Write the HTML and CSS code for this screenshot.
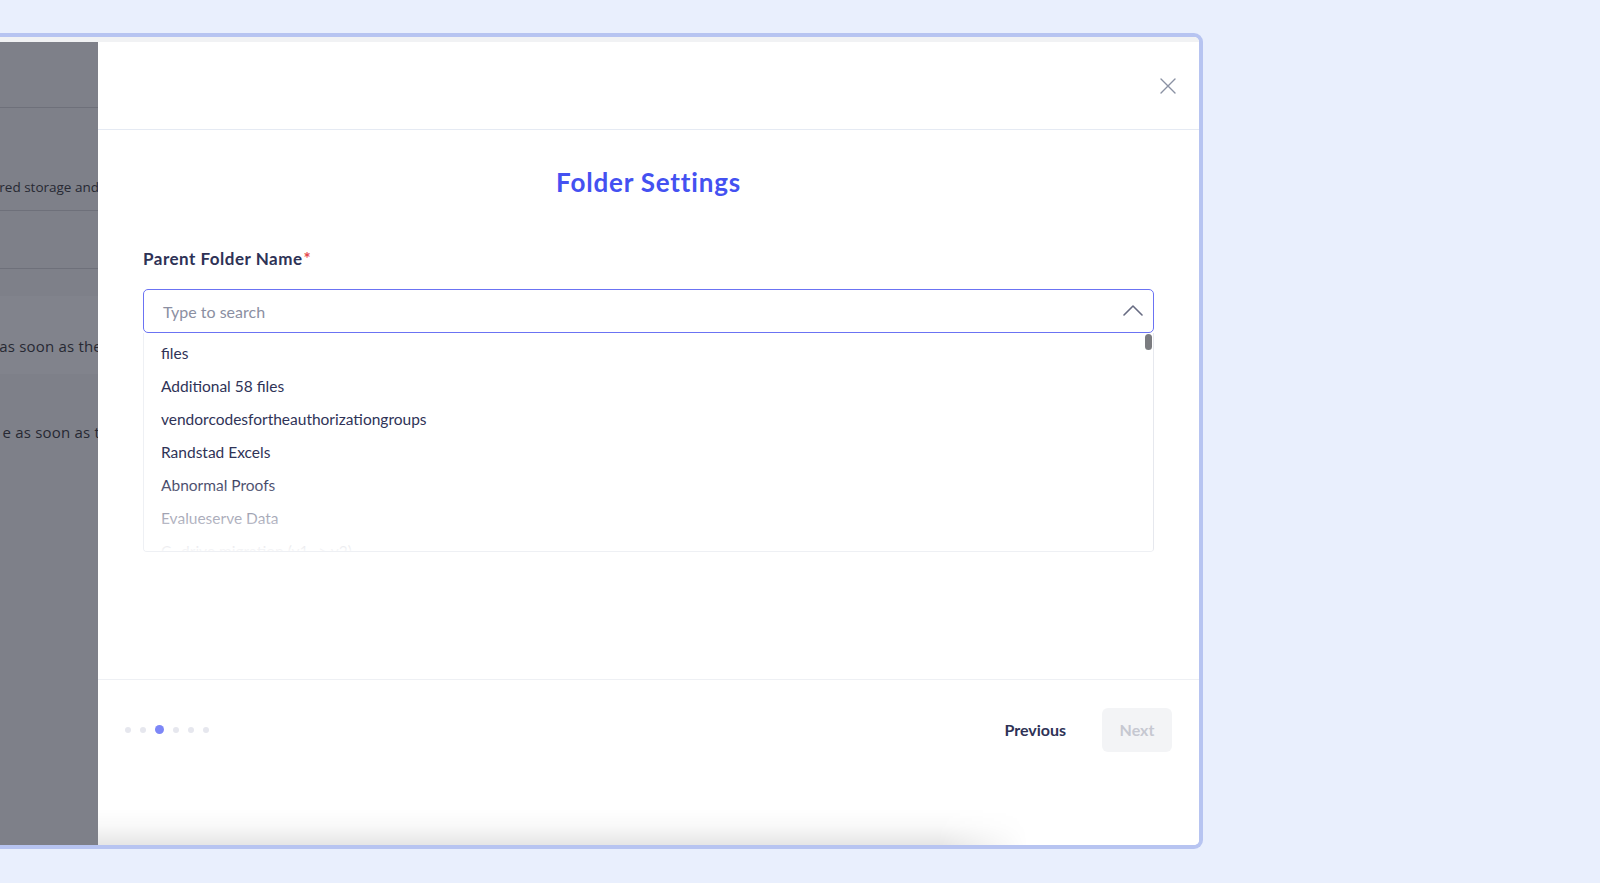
FILE: index.html
```html
<!DOCTYPE html>
<html lang="en">
<head>
<meta charset="utf-8">
<title>Folder Settings</title>
<link rel="stylesheet" href="styles.css">
</head>
<body>
<div class="stage">
  <div class="frame">
    <div class="topband"></div>
    <div class="main">
      <div class="backdrop">
        <div class="bd-row bd-row1"></div>
        <div class="bd-row bd-row2"><span class="bd-text bd-small">red storage and</span></div>
        <div class="bd-row bd-row3"></div>
        <div class="bd-plain bd-p1"><span class="bd-text bd-cut1">as soon as the</span></div>
        <div class="bd-plain bd-p2"><span class="bd-text bd-cut2">e as soon as t</span></div>
      </div>
      <div class="modal">
        <div class="modal-header">
          <button class="close-btn" aria-label="Close">
            <svg width="16" height="16" viewBox="0 0 16 16"><path d="M1 1 L15 15 M15 1 L1 15" stroke="#8a91a3" stroke-width="1.4" fill="none" stroke-linecap="round"/></svg>
          </button>
        </div>
        <div class="modal-body">
          <h1 class="title">Folder Settings</h1>
          <div class="label">Parent Folder Name<span class="req">*</span></div>
          <div class="select">
            <div class="select-input">
              <span class="placeholder">Type to search</span>
              <svg class="chev" width="20" height="12" viewBox="0 0 20 12"><path d="M1 11 L10 2 L19 11" stroke="#676b82" stroke-width="1.6" fill="none" stroke-linecap="round" stroke-linejoin="round"/></svg>
            </div>
            <div class="options">
              <div class="option">files</div>
              <div class="option">Additional 58 files</div>
              <div class="option">vendorcodesfortheauthorizationgroups</div>
              <div class="option">Randstad Excels</div>
              <div class="option">Abnormal Proofs</div>
              <div class="option">Evalueserve Data</div>
              <div class="option">C- drive migration (v1 -&gt; v2)</div>
              <div class="fade"></div>
              <div class="thumb"></div>
            </div>
          </div>
        </div>
        <div class="modal-footer">
          <div class="dots">
            <span class="dot"></span>
            <span class="dot"></span>
            <span class="dot active"></span>
            <span class="dot"></span>
            <span class="dot"></span>
            <span class="dot"></span>
          </div>
          <div class="actions">
            <button class="btn-prev">Previous</button>
            <button class="btn-next" disabled>Next</button>
          </div>
        </div>
        <div class="shade"></div>
      </div>
    </div>
  </div>
</div>
</body>
</html>
```
FILE: styles.css
```css
* { box-sizing: border-box; }
html, body {
  margin: 0;
  padding: 0;
}
body {
  width: 1600px;
  height: 883px;
  overflow: hidden;
  background: #e9effd;
  font-family: "Lato", "Open Sans", sans-serif;
}
.stage {
  padding-top: 33px;
}
.frame {
  width: 1203px;
  height: 816px;
  border: 4px solid #b7c4f1;
  border-left: 0;
  border-radius: 0 9px 9px 0;
  overflow: hidden;
  background: #fff;
  display: flex;
  flex-direction: column;
}
.topband {
  height: 5px;
  background: #f1f2f4;
  flex: none;
}
.main {
  flex: 1;
  display: flex;
  min-height: 0;
}
.backdrop {
  width: 98px;
  flex: none;
  background: #7e8089;
  overflow: hidden;
  font-family: "Open Sans", "DejaVu Sans", sans-serif;
  color: #272933;
}
.bd-row {
  border-bottom: 1px solid #6e707a;
  display: flex;
  justify-content: flex-end;
}
.bd-row1 { height: 66px; }
.bd-row2 { height: 103px; padding-top: 69px; }
.bd-row3 { height: 58px; }
.bd-text {
  white-space: nowrap;
  flex: none;
  line-height: 20px;
}
.bd-small { font-size: 13.5px; letter-spacing: 0; margin-right: -1px; }
.bd-plain {
  display: flex;
  justify-content: flex-end;
}
.bd-p1 {
  height: 104px;
  padding-top: 67px;
  background: linear-gradient(to bottom, #7e8089 0, #7e8089 27px, #81838c 27px);
}
.bd-p2 {
  height: 120px;
  padding-top: 49px;
  background: linear-gradient(to bottom, #81838c 0, #81838c 1px, #7e8089 1px);
}
.bd-cut1, .bd-cut2 { font-size: 15px; letter-spacing: 0.2px; }
.bd-cut1 { margin-right: -4px; }
.bd-cut2 { margin-right: -2px; }

.modal {
  flex: 1;
  display: flex;
  flex-direction: column;
  background: #fff;
  min-width: 0;
}
.modal-header {
  height: 88px;
  flex: none;
  border-bottom: 1px solid #e5eaf3;
  display: flex;
  align-items: center;
  justify-content: flex-end;
  padding-right: 23px;
}
.close-btn {
  border: 0;
  background: transparent;
  padding: 0;
  width: 16px;
  height: 16px;
  display: flex;
  cursor: pointer;
}
.modal-body {
  padding: 37px 45px 0;
  flex: none;
  height: 549px;
}
.title {
  margin: 0;
  text-align: center;
  font-size: 26px;
  line-height: 31px;
  font-weight: 700;
  letter-spacing: 0.8px;
  color: #4451f1;
}
.label {
  margin-top: 49px;
  font-size: 17px;
  line-height: 24px;
  font-weight: 700;
  letter-spacing: 0.5px;
  color: #2e3256;
}
.req { color: #e5484d; margin-left: 1px; }
.select {
  margin-top: 18px;
  width: 1011px;
}
.select-input {
  height: 44px;
  border: 1px solid #6b73f3;
  border-radius: 5px;
  display: flex;
  align-items: center;
  padding: 0 10px 0 19px;
}
.placeholder {
  flex: 1;
  font-size: 16px;
  color: #8b8fa2;
}
.chev { flex: none; margin-top: -2px; }
.options {
  position: relative;
  height: 219px;
  overflow: hidden;
  border: 1px solid #eef0f4;
  border-top: 0;
  border-right-color: #e6e8ee;
  border-radius: 0 0 4px 4px;
  padding-top: 4px;
}
.option {
  height: 33px;
  line-height: 33px;
  padding-left: 17px;
  font-size: 15.5px;
  color: #2f3357;
  white-space: nowrap;
}
.fade {
  position: absolute;
  left: 0;
  right: 0;
  bottom: 0;
  height: 75px;
  background: linear-gradient(to bottom, rgba(255,255,255,0) 0%, rgba(255,255,255,0.5) 45%, rgba(255,255,255,0.96) 100%);
  pointer-events: none;
}
.thumb {
  position: absolute;
  top: 1px;
  right: 1px;
  width: 7px;
  height: 16px;
  border-radius: 4px;
  background: #7b7c80;
}
.modal-footer {
  flex: none;
  border-top: 1px solid #eef0f4;
  height: 100px;
  display: flex;
  align-items: center;
  justify-content: space-between;
  padding: 0 27px 0 27px;
}
.dots {
  display: flex;
  align-items: center;
  gap: 9px;
}
.dot {
  width: 6px;
  height: 6px;
  border-radius: 50%;
  background: #e6e7ee;
}
.dot.active {
  width: 9px;
  height: 9px;
  background: #7d87f7;
}
.actions {
  display: flex;
  align-items: center;
  gap: 16px;
}
.btn-prev, .btn-next {
  font-family: "Lato", "Open Sans", sans-serif;
  font-size: 16px;
  font-weight: 700;
  border: 0;
  height: 44px;
  border-radius: 6px;
  cursor: pointer;
}
.btn-prev {
  background: transparent;
  color: #2e3256;
  padding: 0 20px;
}
.btn-next {
  background: #f3f4f6;
  color: #c6c8d1;
  width: 70px;
  padding: 0;
}
.shade {
  margin-top: auto;
  height: 36px;
  width: 930px;
  flex: none;
  background: linear-gradient(to bottom, rgba(0,0,0,0) 0%, rgba(0,0,0,0.025) 45%, rgba(0,0,0,0.1) 100%);
  -webkit-mask-image: linear-gradient(to right, #000 calc(100% - 90px), transparent 100%);
  mask-image: linear-gradient(to right, #000 calc(100% - 90px), transparent 100%);
}
```
